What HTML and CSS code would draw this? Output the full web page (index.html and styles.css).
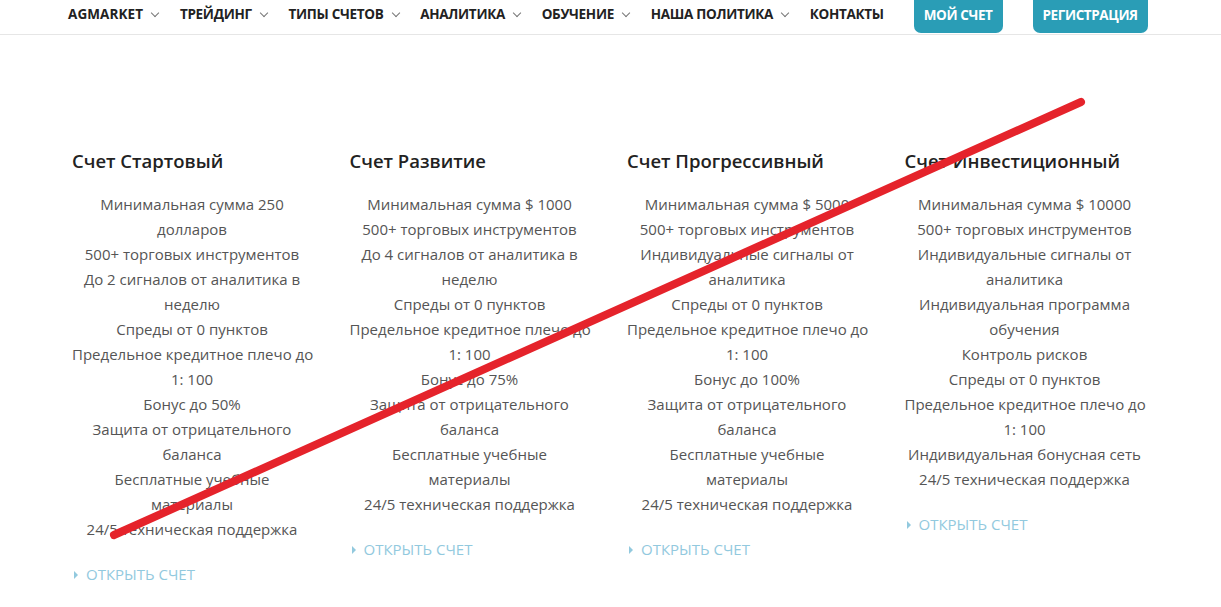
FILE: index.html
```html
<!DOCTYPE html>
<html lang="ru">
<head>
    <meta charset="UTF-8">
    <meta name="viewport" content="width=device-width, initial-scale=1.0">
    <title>Типы счетов</title>
    <link rel="stylesheet" href="styles.css">
</head>
<body>
    <header class="topbar">
        <nav class="nav">
            <ul class="menu">
                <li class="brand">AGMARKET <span class="caret"></span></li>
                <li>Трейдинг <span class="caret"></span></li>
                <li>Типы счетов <span class="caret"></span></li>
                <li>Аналитика <span class="caret"></span></li>
                <li>Обучение <span class="caret"></span></li>
                <li>Наша политика <span class="caret"></span></li>
                <li>Контакты</li>
            </ul>
            <a class="btn btn-account" href="#">Мой счет</a>
            <a class="btn btn-register" href="#">Регистрация</a>
        </nav>
    </header>

    <div class="container">
        <div class="plans">
            <div class="plan">
                <h3>Счет Стартовый</h3>
                <ul class="features">
                    <li>Минимальная сумма 250<br>долларов</li>
                    <li>500+ торговых инструментов</li>
                    <li>До 2 сигналов от аналитика в<br>неделю</li>
                    <li>Спреды от 0 пунктов</li>
                    <li>Предельное кредитное плечо до<br>1: 100</li>
                    <li>Бонус до 50%</li>
                    <li>Защита от отрицательного<br>баланса</li>
                    <li>Бесплатные учебные<br>материалы</li>
                    <li>24/5 техническая поддержка</li>
                </ul>
                <a class="open-link" href="#">Открыть счет</a>
            </div>

            <div class="plan">
                <h3>Счет Развитие</h3>
                <ul class="features">
                    <li>Минимальная сумма $ 1000</li>
                    <li>500+ торговых инструментов</li>
                    <li>До 4 сигналов от аналитика в<br>неделю</li>
                    <li>Спреды от 0 пунктов</li>
                    <li>Предельное кредитное плечо до<br>1: 100</li>
                    <li>Бонус до 75%</li>
                    <li>Защита от отрицательного<br>баланса</li>
                    <li>Бесплатные учебные<br>материалы</li>
                    <li>24/5 техническая поддержка</li>
                </ul>
                <a class="open-link" href="#">Открыть счет</a>
            </div>

            <div class="plan">
                <h3>Счет Прогрессивный</h3>
                <ul class="features">
                    <li>Минимальная сумма $ 5000</li>
                    <li>500+ торговых инструментов</li>
                    <li>Индивидуальные сигналы от<br>аналитика</li>
                    <li>Спреды от 0 пунктов</li>
                    <li>Предельное кредитное плечо до<br>1: 100</li>
                    <li>Бонус до 100%</li>
                    <li>Защита от отрицательного<br>баланса</li>
                    <li>Бесплатные учебные<br>материалы</li>
                    <li>24/5 техническая поддержка</li>
                </ul>
                <a class="open-link" href="#">Открыть счет</a>
            </div>

            <div class="plan">
                <h3>Счет Инвестиционный</h3>
                <ul class="features">
                    <li>Минимальная сумма $ 10000</li>
                    <li>500+ торговых инструментов</li>
                    <li>Индивидуальные сигналы от<br>аналитика</li>
                    <li>Индивидуальная программа<br>обучения</li>
                    <li>Контроль рисков</li>
                    <li>Спреды от 0 пунктов</li>
                    <li>Предельное кредитное плечо до<br>1: 100</li>
                    <li>Индивидуальная бонусная сеть</li>
                    <li>24/5 техническая поддержка</li>
                </ul>
                <a class="open-link" href="#">Открыть счет</a>
            </div>
        </div>
    </div>

    <!-- red strike over the whole block -->
    <svg class="strike" width="1221" height="607" viewBox="0 0 1221 607">
        <line x1="114" y1="535" x2="1081" y2="102" stroke="#e5232b" stroke-width="8" stroke-linecap="round"/>
    </svg>
</body>
</html>
```

FILE: styles.css
```css
body {
    font-family: "Open Sans", "Noto Sans", sans-serif;
    margin: 0;
    padding: 0;
    background-color: #fff;
    color: #555;
    overflow: hidden;
}
a {
    text-decoration: none;
}
.topbar {
    border-bottom: 1px solid #e6e6e6;
    height: 34px;
}
.nav {
    display: flex;
    align-items: flex-start;
    padding-left: 68px;
}
.menu {
    display: flex;
    list-style: none;
    margin: 0;
    padding: 0;
    gap: 21.7px;
}
.menu li {
    font-size: 13.5px;
    font-weight: 700;
    color: #222;
    text-transform: uppercase;
    line-height: 29px;
    display: flex;
    align-items: center;
    letter-spacing: -0.3px;
}
.menu .brand {
    letter-spacing: 0.1px;
}
.caret {
    display: inline-block;
    width: 5px;
    height: 5px;
    border-right: 1px solid #777;
    border-bottom: 1px solid #777;
    transform: rotate(45deg);
    margin: -4px 0 0 9px;
}
.btn {
    display: inline-block;
    background-color: #2a9db6;
    color: #fff;
    font-size: 13.5px;
    font-weight: 700;
    text-transform: uppercase;
    letter-spacing: -0.4px;
    height: 33px;
    line-height: 30px;
    padding: 0 10px;
    border-radius: 0 0 7px 7px;
}
.btn-account {
    margin-left: 30px;
}
.btn-register {
    margin-left: 30px;
}
.container {
    margin-left: 72px;
    width: 1074px;
    padding-top: 114px;
}
.plans {
    display: grid;
    grid-template-columns: repeat(4, 240px);
    column-gap: 37.5px;
    align-items: start;
}
.plan h3 {
    font-size: 18.5px;
    font-weight: 600;
    color: #222;
    margin: 0 0 19px;
    line-height: 24px;
}
.features {
    list-style: none;
    margin: 0;
    padding: 0;
    text-align: center;
    font-size: 15px;
    line-height: 25px;
    white-space: nowrap;
}
.open-link {
    display: inline-block;
    margin-top: 20px;
    font-size: 15px;
    color: #92c9de;
    text-transform: uppercase;
    line-height: 25px;
}
.open-link::before {
    content: "";
    display: inline-block;
    border-left: 4px solid #92c9de;
    border-top: 4px solid transparent;
    border-bottom: 4px solid transparent;
    margin: 0 8px 1px 2px;
}
.strike {
    position: absolute;
    top: 0;
    left: 0;
    pointer-events: none;
}
```
